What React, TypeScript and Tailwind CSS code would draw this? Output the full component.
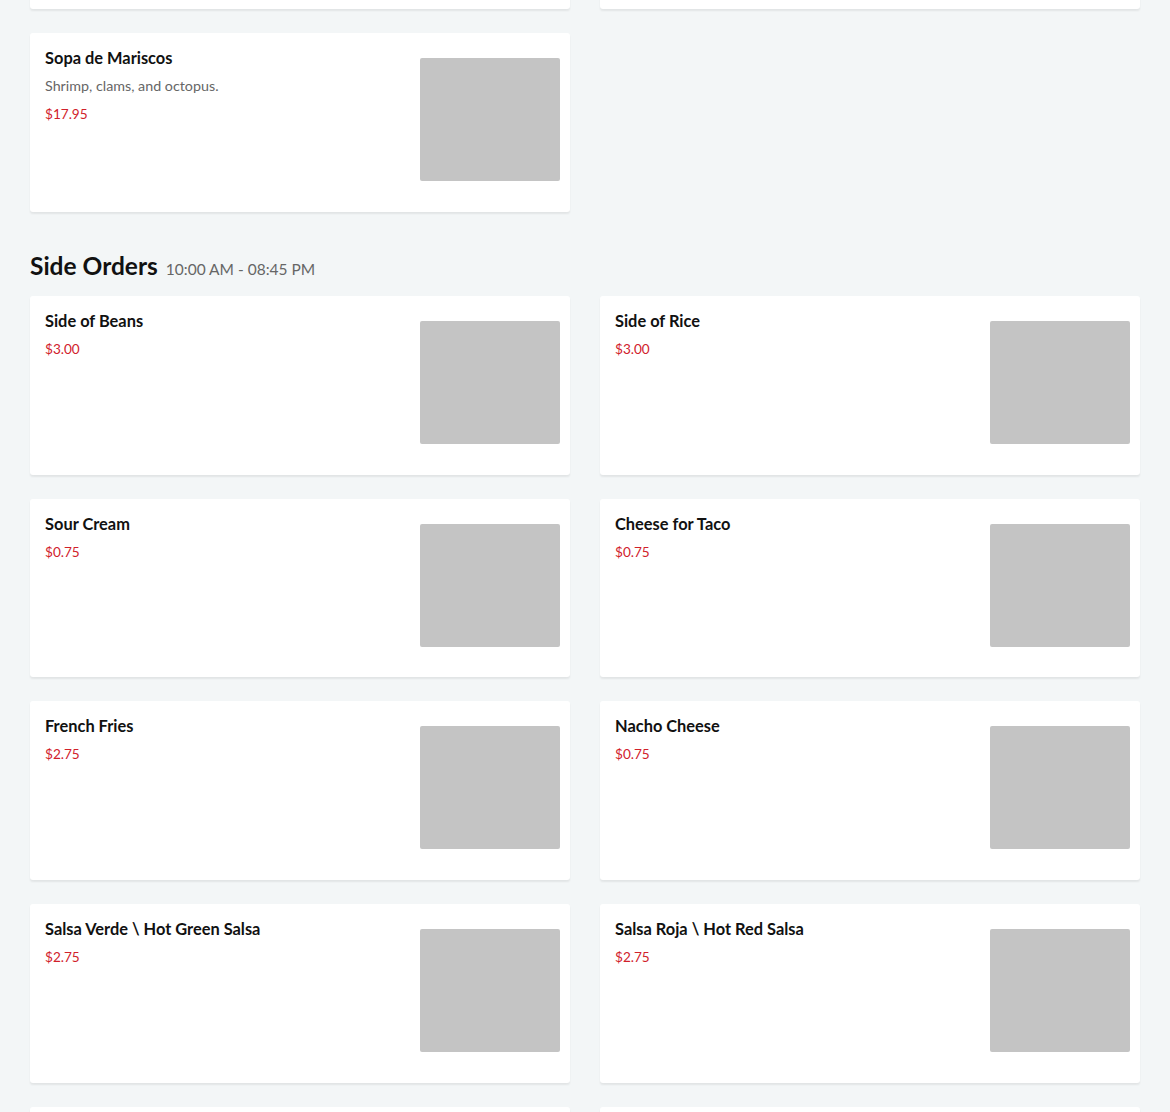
const font = { fontFamily: "Lato, 'Noto Sans', sans-serif" };

type Item = { name: string; desc?: string; price: string };

const previousRow: Item[] = [
  { name: "Caldo de Res", desc: "Beef soup with vegetables.", price: "$14.95" },
  { name: "Menudo", desc: "Traditional tripe soup.", price: "$14.95" },
];

const soups: Item[] = [
  { name: "Sopa de Mariscos", desc: "Shrimp, clams, and octopus.", price: "$17.95" },
];

const sides: Item[] = [
  { name: "Side of Beans", price: "$3.00" },
  { name: "Side of Rice", price: "$3.00" },
  { name: "Sour Cream", price: "$0.75" },
  { name: "Cheese for Taco", price: "$0.75" },
  { name: "French Fries", price: "$2.75" },
  { name: "Nacho Cheese", price: "$0.75" },
  { name: "Salsa Verde \\ Hot Green Salsa", price: "$2.75" },
  { name: "Salsa Roja \\ Hot Red Salsa", price: "$2.75" },
  { name: "Guacamole", price: "$3.50" },
  { name: "Chips and Salsa", price: "$3.50" },
];

function MenuCard({ item }: { item: Item }) {
  return (
    <div className="flex h-[178.67px] justify-between rounded-[3px] bg-white pl-[15px] pr-[10px] shadow-[0_2px_2px_rgba(0,0,0,0.07)]">
      <div className="flex flex-col pt-[15px]">
        <div className="text-[16.4px] font-bold leading-5 text-[#111]">{item.name}</div>
        {item.desc && (
          <div className="mt-2 text-[14.3px] leading-5 text-[#666]">{item.desc}</div>
        )}
        <div className="mt-[8px] text-[13.6px] leading-5 text-[#d1212b]">{item.price}</div>
      </div>
      <div className="mt-[25px] h-[123px] w-[140px] shrink-0 rounded-[2px] bg-[#c4c4c4]" />
    </div>
  );
}

export default function App() {
  return (
    <div className="min-h-screen overflow-hidden bg-[#f3f6f7] px-[30px] pb-10" style={font}>
      <div className="-mt-[169.67px] grid grid-cols-2 gap-x-[30px] gap-y-6">
        {[...previousRow, ...soups].map((item) => (
          <MenuCard key={item.name} item={item} />
        ))}
      </div>

      <div className="mt-10 mb-[16.5px] flex items-baseline gap-2">
        <h2 className="text-[24.5px] font-bold leading-7 text-[#111]">Side Orders</h2>
        <span className="text-[15.5px] leading-5 text-[#666]">10:00 AM - 08:45 PM</span>
      </div>

      <div className="grid grid-cols-2 gap-x-[30px] gap-y-6">
        {sides.map((item) => (
          <MenuCard key={item.name} item={item} />
        ))}
      </div>
    </div>
  );
}
